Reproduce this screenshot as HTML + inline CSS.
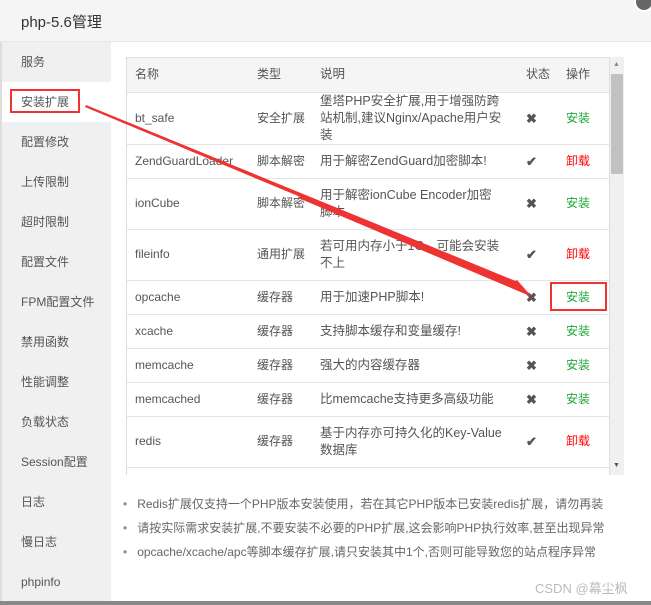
<!DOCTYPE html><html><head><meta charset="utf-8"><style>
*{margin:0;padding:0;box-sizing:border-box}
body{width:651px;height:605px;overflow:hidden;background:#fff;font-family:"Liberation Sans","Noto Sans CJK SC",sans-serif;color:#555;font-size:12px;position:relative}
.title{position:absolute;left:0;top:0;width:651px;height:42px;background:#f5f5f5;border-bottom:1px solid #e6e6e6;font-size:15px;color:#333;padding:11px 0 0 21px}
.side{position:absolute;left:0;top:42px;width:111px;height:559px;background:#f0f0f0;border-left:2px solid #ddd}
.side div{height:40px;line-height:40px;padding-left:19px;font-size:12px;color:#555}
.side .act{background:#fff}
.tbl{position:absolute;left:126px;top:57px;width:484px;border:1px solid #ddd;border-bottom:none;height:418px;overflow:hidden}
table{border-collapse:collapse;width:100%;table-layout:fixed}
td{border-bottom:1px solid #e4e4e4;padding:0 0 0 8px;vertical-align:middle;line-height:17px;font-size:12px;color:#555}
td.d{padding-right:14px;font-size:12.5px}
tr.h td{background:#f5f5f5;height:34px}
.g{color:#20a53a}.r{color:#f00}
.s{color:#555;font-size:13px;font-weight:bold}
.sb{position:absolute;left:610px;top:57px;width:14px;height:418px;background:#f0f0f0}
.sb i{position:absolute;left:1px;top:17px;width:12px;height:100px;background:#c1c1c1}
ul{position:absolute;left:127px;top:494px;list-style:none;font-size:12px;color:#666}
ul li{height:24px;line-height:20px;white-space:nowrap}
ul li:before{content:"•";margin:0 10px 0 -4px;color:#888}
.wm{position:absolute;left:535px;top:578px;color:#bbb;font-size:13px}
.bot{position:absolute;left:0;top:601px;width:651px;height:4px;background:#888}
</style></head><body>
<div class="title">php-5.6管理</div>
<div style="position:absolute;left:634px;top:-8px;width:20px;height:20px;border-radius:50%;background:#666;border:2px solid #fff"></div>
<div class="side">
<div>服务</div><div class="act">安装扩展</div><div>配置修改</div><div>上传限制</div><div>超时限制</div><div>配置文件</div><div>FPM配置文件</div><div>禁用函数</div><div>性能调整</div><div>负载状态</div><div>Session配置</div><div>日志</div><div>慢日志</div><div>phpinfo</div>
</div>
<div style="position:absolute;left:10px;top:89px;width:70px;height:24px;border:2px solid #e33"></div>
<div class="tbl"><table>
<colgroup><col style="width:122px"><col style="width:63px"><col style="width:206px"><col style="width:40px"><col></colgroup>
<tr class="h"><td>名称</td><td>类型</td><td class="d">说明</td><td>状态</td><td>操作</td></tr>
<tr style="height:51px"><td>bt_safe</td><td>安全扩展</td><td class="d">堡塔PHP安全扩展,用于增强防跨站机制,建议Nginx/Apache用户安装</td><td class="s">✖</td><td class="g">安装</td></tr>
<tr style="height:34px"><td>ZendGuardLoader</td><td>脚本解密</td><td class="d">用于解密ZendGuard加密脚本!</td><td class="s">✔</td><td class="r">卸载</td></tr>
<tr style="height:51px"><td>ionCube</td><td>脚本解密</td><td class="d">用于解密ionCube Encoder加密脚本</td><td class="s">✖</td><td class="g">安装</td></tr>
<tr style="height:51px"><td>fileinfo</td><td>通用扩展</td><td class="d">若可用内存小于1G，可能会安装不上</td><td class="s">✔</td><td class="r">卸载</td></tr>
<tr style="height:34px"><td>opcache</td><td>缓存器</td><td class="d">用于加速PHP脚本!</td><td class="s">✖</td><td class="g">安装</td></tr>
<tr style="height:34px"><td>xcache</td><td>缓存器</td><td class="d">支持脚本缓存和变量缓存!</td><td class="s">✖</td><td class="g">安装</td></tr>
<tr style="height:34px"><td>memcache</td><td>缓存器</td><td class="d">强大的内容缓存器</td><td class="s">✖</td><td class="g">安装</td></tr>
<tr style="height:34px"><td>memcached</td><td>缓存器</td><td class="d">比memcache支持更多高级功能</td><td class="s">✖</td><td class="g">安装</td></tr>
<tr style="height:51px"><td>redis</td><td>缓存器</td><td class="d">基于内存亦可持久化的Key-Value数据库</td><td class="s">✔</td><td class="r">卸载</td></tr>
<tr style="height:34px"><td></td><td></td><td></td><td></td><td></td></tr>
</table></div>
<div class="sb"><i></i><span style="position:absolute;left:3px;top:4px;font-size:7px;color:#888">▲</span><span style="position:absolute;left:3px;top:405px;font-size:7px;color:#555">▼</span></div>
<div style="position:absolute;left:550px;top:282px;width:57px;height:29px;border:2px solid #e33"></div>
<svg style="position:absolute;left:0;top:0" width="651" height="605"><polygon points="85,107 516,287 518,282 86,105" fill="#e33"/><polygon points="507,286 532,297 517,280" fill="#e33"/><line x1="300" y1="196" x2="520" y2="289" stroke="#e33" stroke-width="5"/></svg>
<ul><li>Redis扩展仅支持一个PHP版本安装使用，若在其它PHP版本已安装redis扩展，请勿再装</li><li>请按实际需求安装扩展,不要安装不必要的PHP扩展,这会影响PHP执行效率,甚至出现异常</li><li>opcache/xcache/apc等脚本缓存扩展,请只安装其中1个,否则可能导致您的站点程序异常</li></ul>
<div class="wm">CSDN @幕尘枫</div>
<div class="bot"></div>
</body></html>
